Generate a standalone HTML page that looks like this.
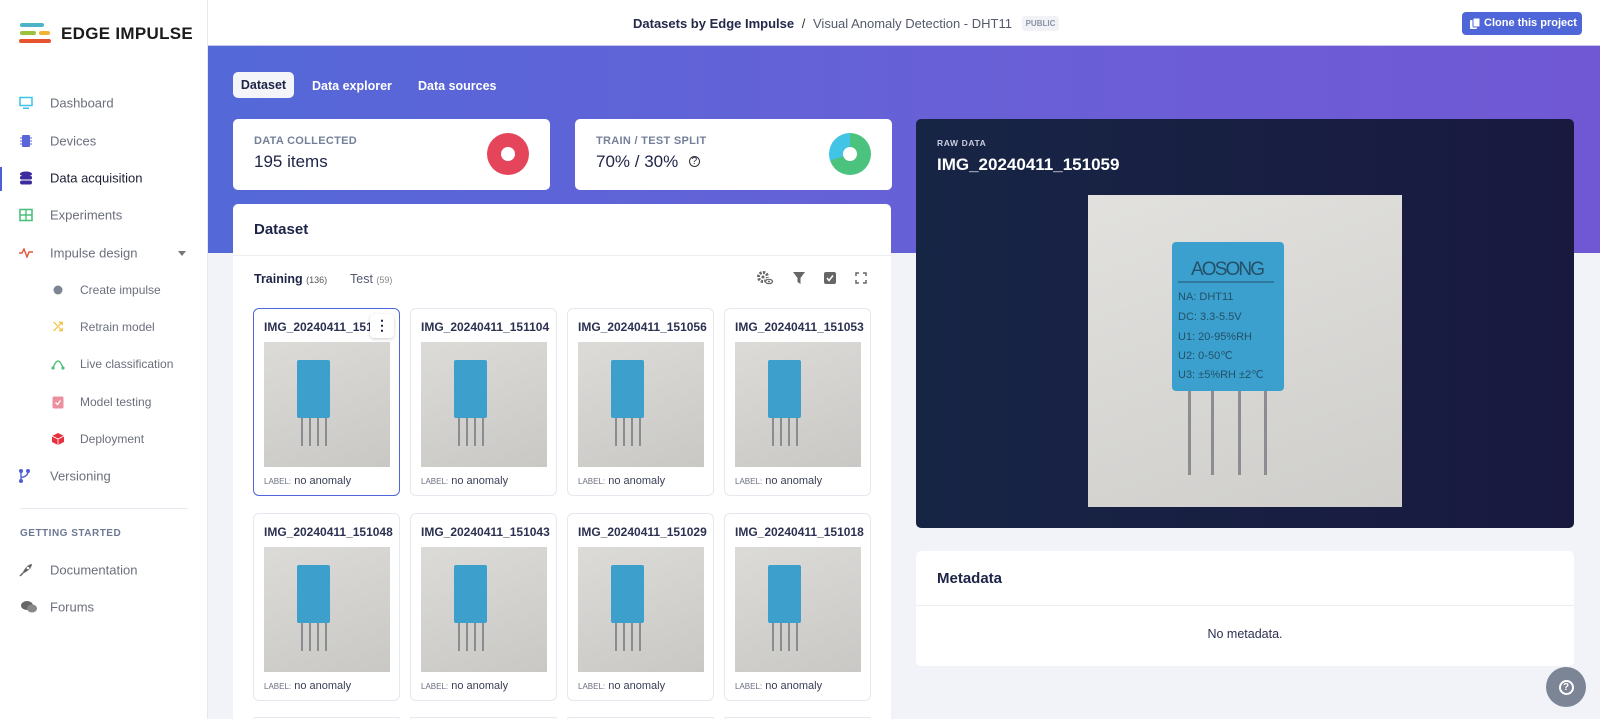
<!DOCTYPE html>
<html style="height:719px;overflow:hidden"><head><meta charset="utf-8"><style>
*{box-sizing:border-box;margin:0;padding:0}
html,body{width:1600px;height:719px;overflow:hidden}
body{background:#f1f3f9;font-family:"Liberation Sans",sans-serif;position:relative;color:#1e2447}
.a{position:absolute}
#side{left:0;top:0;width:208px;height:719px;background:#fff;border-right:1px solid #e6e8ef}
.nav{position:absolute;left:50px;font-size:13px;color:#6b6f7c;transform:translateY(-50%)}
.sub{left:80px;font-size:12px}
.ic{position:absolute;transform:translate(-50%,-50%)}
#hdr{left:208px;top:0;width:1392px;height:46px;background:#fff;border-bottom:1px solid #c9c6ee}
#band{left:208px;top:46px;width:1392px;height:207px;background:linear-gradient(90deg,#5468d8,#6a5fd6 60%,#7058d4)}
.card{position:absolute;background:#fff;border-radius:5px}
.lbl{font-size:11px;color:#74809a;letter-spacing:.3px;font-weight:bold}
.thumb{position:absolute;width:147px;height:188px;background:#fff;border:1px solid #e6e8ef;border-radius:6px}
.thumb .t{position:absolute;left:10px;top:11px;font-size:12px;font-weight:bold;color:#2c3152;white-space:nowrap}
.thumb .im{position:absolute;left:10px;top:33px;width:126px;height:125px;background:linear-gradient(160deg,#dcdbd8,#c9c8c5)}
.thumb .l{position:absolute;left:10px;top:166px;font-size:11px;color:#3a3f56}
.thumb .l span{font-size:8px;color:#6b7080}
.chip{position:absolute;left:33px;top:18px;width:33px;height:58px;background:#3d9fcc;border-radius:2px}
.pin{position:absolute;top:76px;width:2px;height:28px;background:#8a8d90}
</style></head><body>
<div id="side" class="a">
 <svg class="a" style="left:18px;top:22px" width="34" height="24" viewBox="0 0 34 24"><rect x="2" y="1" width="24" height="4" rx="2" fill="#4cb3c9"/><rect x="2" y="9" width="16" height="4" rx="2" fill="#9bc23c"/><rect x="21" y="9" width="11" height="4" rx="2" fill="#f2b233"/><rect x="1" y="17" width="32" height="4" rx="2" fill="#e5532f"/></svg>
 <div class="a" style="left:61px;top:24px;font-size:17px;font-weight:bold;color:#1b1b1b;letter-spacing:.3px">EDGE IMPULSE</div>
 <div class="a" style="left:0;top:167px;width:2px;height:24px;background:#4d5ed6"></div>
 <svg class="ic" style="left:26px;top:103px" width="14" height="13"><rect x="1" y="1" width="12" height="8" fill="none" stroke="#3ec3e8" stroke-width="1.5"/><rect x="4" y="11" width="6" height="1.5" fill="#3ec3e8"/></svg>
 <svg class="ic" style="left:26px;top:141px" width="12" height="14"><rect x="2" y="1" width="8" height="12" rx="1" fill="#5866d8"/><path d="M0 4H2M0 7H2M0 10H2M10 4H12M10 7H12M10 10H12" stroke="#5866d8"/></svg>
 <svg class="ic" style="left:26px;top:178px" width="13" height="14"><ellipse cx="6.5" cy="3" rx="6" ry="2.5" fill="#3b2b9c"/><rect x=".5" y="5" width="12" height="3.5" rx="1.5" fill="#3b2b9c"/><rect x=".5" y="9.5" width="12" height="4" rx="2" fill="#3b2b9c"/></svg>
 <svg class="ic" style="left:26px;top:215px" width="14" height="13"><rect x="1" y="1" width="12" height="11" fill="none" stroke="#4fc07c" stroke-width="1.6"/><path d="M1 6.5H13M7 1V12" stroke="#4fc07c" stroke-width="1.4"/></svg>
 <svg class="ic" style="left:26px;top:253px" width="14" height="10"><path d="M0 5H3L5 1L8 9L10 4H14" fill="none" stroke="#e5533b" stroke-width="1.4"/></svg>
 <div class="a" style="left:178px;top:251px;border:4px solid transparent;border-top:5px solid #777"></div>
 <div class="ic" style="left:58px;top:290px;width:9px;height:9px;border-radius:50%;background:#7d8595"></div>
 <div class="ic" style="left:58px;top:327px;color:#f2b92a;font-size:12px;font-weight:bold">⤮</div>
 <svg class="ic" style="left:58px;top:364px" width="14" height="12"><path d="M2 10Q7 -4 12 10" fill="none" stroke="#4fc07c" stroke-width="1.4"/><circle cx="2" cy="10" r="1.6" fill="#4fc07c"/><circle cx="12" cy="10" r="1.6" fill="#4fc07c"/></svg>
 <svg class="ic" style="left:58px;top:402px" width="11" height="13"><rect x="0" y="1" width="11" height="12" rx="1.5" fill="#ec8f9e"/><path d="M3 7L5 9L8 5" stroke="#fff" stroke-width="1.3" fill="none"/></svg>
 <svg class="ic" style="left:58px;top:439px" width="12" height="12"><path d="M6 0L12 3V9L6 12L0 9V3Z" fill="#e5313f"/><path d="M6 6V12M0 3L6 6L12 3" stroke="#fff" stroke-width=".8" fill="none"/></svg>
 <svg class="ic" style="left:24px;top:476px" width="12" height="15"><circle cx="3" cy="2.5" r="2" fill="#4d5ed6"/><circle cx="3" cy="12.5" r="2" fill="#4d5ed6"/><circle cx="10" cy="2.5" r="2" fill="#4d5ed6"/><path d="M3 3V12M10 3Q10 8 3 9" stroke="#4d5ed6" stroke-width="1.4" fill="none"/></svg>
 <div class="nav" style="top:103px">Dashboard</div>
 <div class="nav" style="top:141px">Devices</div>
 <div class="nav" style="top:178px;color:#1b1e33">Data acquisition</div>
 <div class="nav" style="top:215px">Experiments</div>
 <div class="nav" style="top:253px">Impulse design</div>
 <div class="nav sub" style="top:290px">Create impulse</div>
 <div class="nav sub" style="top:327px">Retrain model</div>
 <div class="nav sub" style="top:364px">Live classification</div>
 <div class="nav sub" style="top:402px">Model testing</div>
 <div class="nav sub" style="top:439px">Deployment</div>
 <div class="nav" style="top:476px">Versioning</div>
 <div class="a" style="left:20px;top:508px;width:168px;height:1px;background:#e6e8ef"></div>
 <div class="a" style="left:20px;top:528px;font-size:10px;font-weight:bold;color:#6d7895;letter-spacing:.5px">GETTING STARTED</div>
 <svg class="ic" style="left:26px;top:570px" width="14" height="14"><path d="M3 11L5 7Q9 1 13 1Q13 5 7 9Z" fill="#666"/><circle cx="9" cy="5" r="1.3" fill="#fff"/><path d="M1 13L4 10" stroke="#666" stroke-width="1.5"/></svg>
 <svg class="ic" style="left:29px;top:607px" width="16" height="13"><ellipse cx="6" cy="5" rx="6" ry="4.5" fill="#666"/><ellipse cx="11" cy="8" rx="5" ry="4" fill="#888"/></svg>
 <div class="nav" style="top:570px">Documentation</div>
 <div class="nav" style="top:607px">Forums</div>
</div>
<div id="hdr" class="a">
 <div class="a" style="left:425px;top:16px;font-size:13px;white-space:nowrap"><b style="color:#24294a">Datasets by Edge Impulse</b> <span style="color:#333;margin:0 4px">/</span> <span style="color:#555a6b">Visual Anomaly Detection - DHT11</span> <span style="display:inline-block;margin-left:6px;background:#f1f2f5;color:#8a93a8;font-size:8px;font-weight:bold;padding:3px 4px;border-radius:3px;vertical-align:2px">PUBLIC</span></div>
 <div class="a" style="left:1254px;top:12px;width:120px;height:23px;background:#4f66d9;border-radius:4px;color:#fff;font-size:11px;font-weight:bold;line-height:23px;padding-left:22px;white-space:nowrap">Clone this project
  <svg class="a" style="left:8px;top:6px" width="10" height="11"><rect x="0" y="2" width="7" height="9" rx="1" fill="#fff"/><rect x="3" y="0" width="7" height="9" rx="1" fill="#fff" stroke="#4f66d9"/></svg></div>
</div>
<div id="band" class="a"></div>
<div class="a" style="left:233px;top:72px;width:61px;height:26px;background:#f4f5f8;border-radius:5px;font-size:12.5px;font-weight:bold;line-height:26px;text-align:center;color:#1e2447">Dataset</div>
<div class="a" style="left:312px;top:79px;font-size:12.5px;font-weight:bold;color:#fff">Data explorer</div>
<div class="a" style="left:418px;top:79px;font-size:12.5px;font-weight:bold;color:#fff">Data sources</div>

<div class="card" style="left:233px;top:119px;width:317px;height:71px">
 <div class="a lbl" style="left:21px;top:16px">DATA COLLECTED</div>
 <div class="a" style="left:21px;top:33px;font-size:17px">195 items</div>
 <div class="a" style="left:254px;top:14px;width:42px;height:42px;border-radius:50%;background:#e5455a"></div>
 <div class="a" style="left:268px;top:28px;width:14px;height:14px;border-radius:50%;background:#fff"></div>
</div>
<div class="card" style="left:575px;top:119px;width:317px;height:71px">
 <div class="a lbl" style="left:21px;top:16px">TRAIN / TEST SPLIT</div>
 <div class="a" style="left:21px;top:33px;font-size:17px">70% / 30% <span style="font-size:10px;border:1.3px solid #333;border-radius:50%;display:inline-block;width:11px;height:11px;line-height:9px;text-align:center;margin-left:6px;vertical-align:3px">?</span></div>
 <div class="a" style="left:254px;top:14px;width:42px;height:42px;border-radius:50%;background:conic-gradient(#4cc27f 0 70%,#41c4e6 70% 100%)"></div>
 <div class="a" style="left:268px;top:28px;width:14px;height:14px;border-radius:50%;background:#fff"></div>
</div>

<div class="card" style="left:233px;top:204px;width:658px;height:515px;border-radius:5px 5px 0 0">
 <div class="a" style="left:21px;top:17px;font-size:15px;font-weight:bold;color:#1e2447">Dataset</div>
 <div class="a" style="left:0;top:51px;width:658px;height:1px;background:#eceef3"></div>
 <div class="a" style="left:21px;top:68px;font-size:12.5px;font-weight:bold">Training <span style="font-size:9px;font-weight:normal;color:#555">(136)</span></div>
 <div class="a" style="left:117px;top:68px;font-size:12.5px;color:#555a70">Test <span style="font-size:9px;color:#888">(59)</span></div>
 <svg class="a" style="left:523px;top:66px" width="18" height="16"><circle cx="7" cy="7" r="4.5" fill="none" stroke="#666" stroke-width="3" stroke-dasharray="2.2 1.3"/><circle cx="7" cy="7" r="1.5" fill="#666"/><circle cx="13" cy="11.5" r="4" fill="#fff"/><ellipse cx="13" cy="11.5" rx="3.5" ry="2.2" fill="none" stroke="#666" stroke-width="1.2"/><circle cx="13" cy="11.5" r="1" fill="#666"/></svg>
 <svg class="a" style="left:560px;top:68px" width="12" height="12"><path d="M0 0H12L7.5 6V12L4.5 10V6Z" fill="#666"/></svg>
 <svg class="a" style="left:591px;top:68px" width="12" height="12"><rect width="12" height="12" rx="2" fill="#666"/><path d="M3 6L5 8.5L9 3.5" stroke="#fff" stroke-width="1.5" fill="none"/></svg>
 <svg class="a" style="left:622px;top:68px" width="12" height="12"><path d="M1 4V1H4M8 1H11V4M11 8V11H8M4 11H1V8" stroke="#666" stroke-width="1.5" fill="none"/></svg>
</div>

<div id="grid"></div>

<div class="a" style="left:916px;top:119px;width:658px;height:409px;border-radius:5px;background:linear-gradient(90deg,#172545,#19193f)">
 <div class="a" style="left:21px;top:19px;font-size:8.5px;font-weight:bold;color:#c9cde0;letter-spacing:.6px">RAW DATA</div>
 <div class="a" style="left:21px;top:36px;font-size:17px;font-weight:bold;color:#fff">IMG_20240411_151059</div>
 <div class="a" style="left:172px;top:76px;width:314px;height:312px;background:linear-gradient(160deg,#e2e1de,#cfcecb)">
  <div class="a" style="left:84px;top:47px;width:112px;height:149px;background:#3ba0cd;border-radius:4px"></div>
  <svg class="a" style="left:84px;top:47px" width="112" height="149" font-family="Liberation Sans" fill="#24506a">
   <text x="56" y="33" font-size="19" text-anchor="middle" textLength="74">AOSONG</text>
   <line x1="6" y1="40" x2="102" y2="40" stroke="#24506a"/>
   <text x="6" y="58" font-size="11">NA: DHT11</text><text x="6" y="78" font-size="11">DC: 3.3-5.5V</text><text x="6" y="98" font-size="11">U1: 20-95%RH</text><text x="6" y="117" font-size="11">U2: 0-50℃</text><text x="6" y="136" font-size="11">U3: ±5%RH ±2℃</text></svg>
  <div class="a" style="left:100px;top:196px;width:3px;height:84px;background:#8b8d90"></div>
  <div class="a" style="left:123px;top:196px;width:3px;height:84px;background:#8b8d90"></div>
  <div class="a" style="left:150px;top:196px;width:3px;height:84px;background:#8b8d90"></div>
  <div class="a" style="left:176px;top:196px;width:3px;height:84px;background:#8b8d90"></div>
 </div>
</div>

<div class="card" style="left:916px;top:551px;width:658px;height:115px">
 <div class="a" style="left:21px;top:19px;font-size:15px;font-weight:bold">Metadata</div>
 <div class="a" style="left:0;top:54px;width:658px;height:1px;background:#eceef3"></div>
 <div class="a" style="left:0;top:76px;width:658px;text-align:center;font-size:12.5px;color:#2c3152">No metadata.</div>
</div>
<div class="a" style="left:1546px;top:667px;width:40px;height:40px;border-radius:50%;background:#7c8596;color:#fff;text-align:center;line-height:40px;font-weight:bold;font-size:14px"><span style="display:inline-block;width:15px;height:15px;border:2px solid #fff;border-radius:50%;line-height:12px;font-size:10px;vertical-align:2px">?</span></div>

<script>
var names=[["IMG_20240411_1510","IMG_20240411_151104","IMG_20240411_151056","IMG_20240411_151053"],["IMG_20240411_151048","IMG_20240411_151043","IMG_20240411_151029","IMG_20240411_151018"]];
var xs=[253,410,567,724],ys=[308,513],h="";
for(var r=0;r<2;r++)for(var c=0;c<4;c++){
 var sel=(r==0&&c==0);
 h+='<div class="thumb" style="left:'+xs[c]+'px;top:'+ys[r]+'px;'+(sel?'border:1.5px solid #4f66d9;':'')+'">'+
 '<div class="t">'+names[r][c]+'</div>'+
 '<div class="im"><div class="chip"></div><div class="pin" style="left:37px"></div><div class="pin" style="left:45px"></div><div class="pin" style="left:53px"></div><div class="pin" style="left:61px"></div></div>'+
 '<div class="l"><span>LABEL:</span> no anomaly</div>'+
 (sel?'<div style="position:absolute;left:116px;top:5px;width:24px;height:24px;background:#fff;border-radius:4px;box-shadow:0 1px 3px rgba(0,0,0,.2);text-align:center;font-weight:bold;font-size:14px;line-height:22px">⋮</div>':'')+
 '</div>';}
for(var c=0;c<4;c++)h+='<div style="position:absolute;left:'+xs[c]+'px;top:717px;width:147px;height:2px;border:1px solid #e6e8ef;border-bottom:none;border-radius:6px 6px 0 0"></div>';
document.getElementById('grid').innerHTML=h;
</script>
</body></html>
